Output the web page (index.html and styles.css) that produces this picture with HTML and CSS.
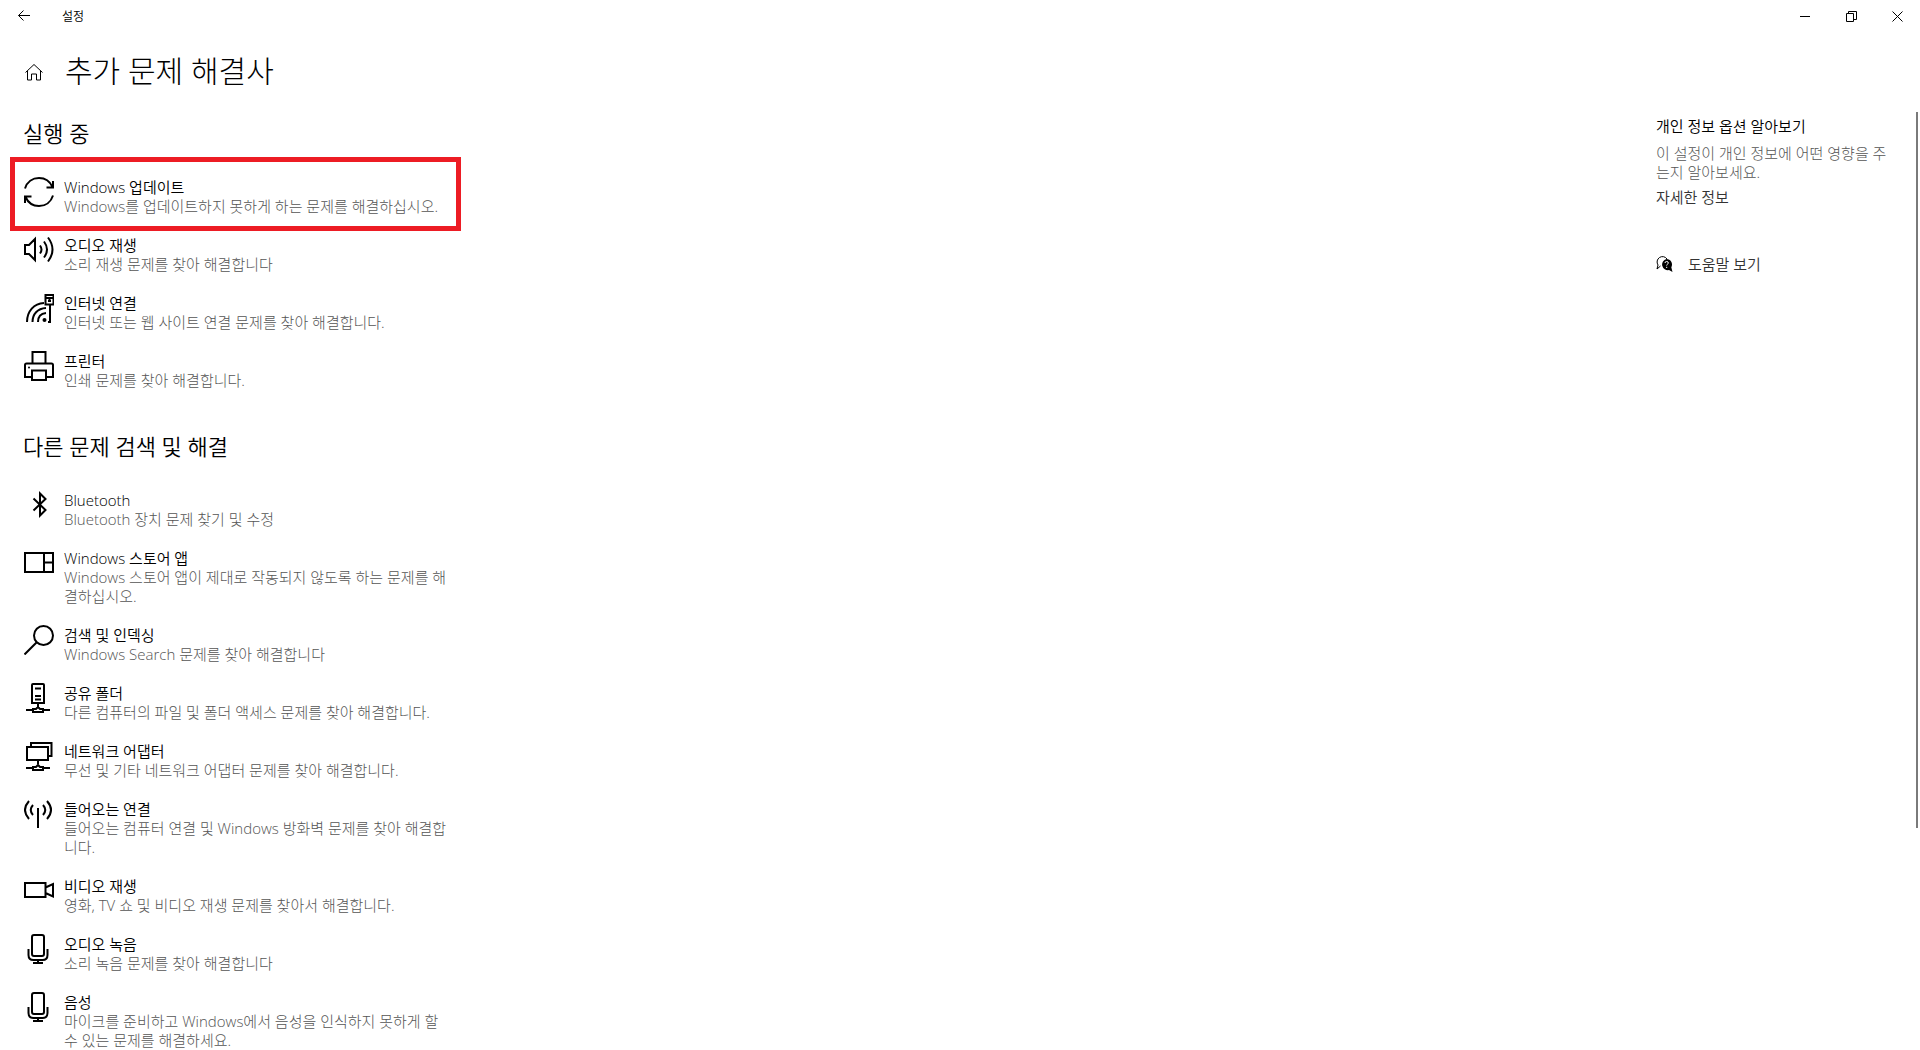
FILE: index.html
```html
<!DOCTYPE html>
<html lang="ko">
<head>
    <meta charset="UTF-8">
    <meta name="viewport" content="width=device-width, initial-scale=1.0">
    <title>설정</title>
    <link rel="stylesheet" href="styles.css">
</head>
<body>
    <!-- Title bar -->
    <header class="titlebar">
        <button class="back" aria-label="뒤로">
            <svg width="14" height="14" viewBox="0 0 14 14"><path d="M13 6.5H1.5M6.5 1.5l-5 5 5 5"></path></svg>
        </button>
        <span class="app-name">설정</span>
        <div class="window-buttons">
            <button aria-label="최소화">
                <svg width="11" height="11" viewBox="0 0 11 11"><path d="M0 5.5h10"></path></svg>
            </button>
            <button aria-label="이전 크기로 복원">
                <svg width="11" height="11" viewBox="0 0 11 11"><path d="M.5 2.5h7v8h-7zM2.5 2.5v-2h8v8h-3"></path></svg>
            </button>
            <button aria-label="닫기">
                <svg width="11" height="11" viewBox="0 0 11 11"><path d="M.5.5l10 10M10.5.5l-10 10"></path></svg>
            </button>
        </div>
    </header>

    <div class="page-title">
        <button class="home" aria-label="홈">
            <svg width="20" height="18" viewBox="0 0 20 18"><path d="M1.5 9.500L10 1.500l8.500 8M3.500 8v9h4v-6h5v6h4V8"></path></svg>
        </button>
        <h1>추가 문제 해결사</h1>
    </div>

    <div class="content">
        <main>
            <section>
                <h2>실행 중</h2>
                <ul class="list">
                    <li class="highlight">
                        <button class="item">
                            <svg class="icon" viewBox="0 0 30 30"><path d="M1 11.500C3 5 8.500 1 15 1c6 0 11 3.500 13.500 9M29 4v6.500h-6.500M29 18.500C27 25 21.500 29 15 29c-6 0-11-3.500-13.500-9M1 26v-6.500h6.500"></path></svg>
                            <span class="text">
                                <span class="name">Windows 업데이트</span>
                                <span class="desc">Windows를 업데이트하지 못하게 하는 문제를 해결하십시오.</span>
                            </span>
                        </button>
                    </li>
                    <li>
                        <button class="item">
                            <svg class="icon" viewBox="0 0 30 30"><path d="M1 10h4l6-6v21l-6-6H1zM16 10.500q3 4 0 8M20 6.500q6 8 0 16M24 2.500q9 12 0 24"></path></svg>
                            <span class="text">
                                <span class="name">오디오 재생</span>
                                <span class="desc">소리 재생 문제를 찾아 해결합니다</span>
                            </span>
                        </button>
                    </li>
                    <li>
                        <button class="item">
                            <svg class="icon" viewBox="0 0 30 30"><path d="M3 29C3 18 10 10.500 20 10M8.500 29c0-8 5-13.500 13.500-14M14 29c0-5 3-8.500 8-9M26 12v17h-2M21.500 2h8v9.500h-8zM21 5h9M25.500 5v4M24 8h3"></path><circle class="dot" cx="20.500" cy="27" r="2"></circle></svg>
                            <span class="text">
                                <span class="name">인터넷 연결</span>
                                <span class="desc">인터넷 또는 웹 사이트 연결 문제를 찾아 해결합니다.</span>
                            </span>
                        </button>
                    </li>
                    <li>
                        <button class="item">
                            <svg class="icon" viewBox="0 0 30 30"><path d="M8.500 12V1h13v11M7.500 26H1V14q0-1.500 1.500-1.500h25Q29 12.500 29 14v12h-6.500M8 19.500h14V29H8z"></path><circle class="dot" cx="5" cy="16.500" r="1"></circle></svg>
                            <span class="text">
                                <span class="name">프린터</span>
                                <span class="desc">인쇄 문제를 찾아 해결합니다.</span>
                            </span>
                        </button>
                    </li>
                </ul>
            </section>

            <section>
                <h2>다른 문제 검색 및 해결</h2>
                <ul class="list">
                    <li>
                        <button class="item">
                            <svg class="icon" viewBox="0 0 30 30"><path d="M9.500 8.500L21.500 20 16 25.500v-22L21.500 9 9.500 20.500"></path></svg>
                            <span class="text">
                                <span class="name">Bluetooth</span>
                                <span class="desc">Bluetooth 장치 문제 찾기 및 수정</span>
                            </span>
                        </button>
                    </li>
                    <li>
                        <button class="item">
                            <svg class="icon" viewBox="0 0 30 30"><path d="M1 5h28v19H1zM20 5v19M20 14.500h9"></path></svg>
                            <span class="text">
                                <span class="name">Windows 스토어 앱</span>
                                <span class="desc">Windows 스토어 앱이 제대로 작동되지 않도록 하는 문제를 해결하십시오.</span>
                            </span>
                        </button>
                    </li>
                    <li>
                        <button class="item">
                            <svg class="icon" viewBox="0 0 30 30"><circle cx="19.500" cy="10.500" r="9.500"></circle><path d="M13 17L.5 29.500"></path></svg>
                            <span class="text">
                                <span class="name">검색 및 인덱싱</span>
                                <span class="desc">Windows Search 문제를 찾아 해결합니다</span>
                            </span>
                        </button>
                    </li>
                    <li>
                        <button class="item">
                            <svg class="icon" viewBox="0 0 30 30"><path d="M9 1h10q1 0 1 1v18H8V2q0-1 1-1zM11 5.500h6M11 13h6M11 16.500h6M14 20v4M2 27h7M19 27h7M9 29v-3h3l2-2 2 2h3v3z"></path></svg>
                            <span class="text">
                                <span class="name">공유 폴더</span>
                                <span class="desc">다른 컴퓨터의 파일 및 폴더 액세스 문제를 찾아 해결합니다.</span>
                            </span>
                        </button>
                    </li>
                    <li>
                        <button class="item">
                            <svg class="icon" viewBox="0 0 30 30"><path d="M3 6h21v13H3zM7 6V2h20.500v13H24M14 19v4M2 27h7M19 27h7M9 29v-3h3l2-2 2 2h3v3z"></path></svg>
                            <span class="text">
                                <span class="name">네트워크 어댑터</span>
                                <span class="desc">무선 및 기타 네트워크 어댑터 문제를 찾아 해결합니다.</span>
                            </span>
                        </button>
                    </li>
                    <li>
                        <button class="item">
                            <svg class="icon" viewBox="0 0 30 30"><path d="M14 9v20M9 6q-4.500 5 0 10M19 6q4.500 5 0 10M5 2q-8 9 0 18M23 2q8 9 0 18"></path></svg>
                            <span class="text">
                                <span class="name">들어오는 연결</span>
                                <span class="desc">들어오는 컴퓨터 연결 및 Windows 방화벽 문제를 찾아 해결합니다.</span>
                            </span>
                        </button>
                    </li>
                    <li>
                        <button class="item">
                            <svg class="icon" viewBox="0 0 30 30"><path d="M1 7h20.500v14H1zM21.500 11.500L29 8v12.500L21.500 17"></path></svg>
                            <span class="text">
                                <span class="name">비디오 재생</span>
                                <span class="desc">영화, TV 쇼 및 비디오 재생 문제를 찾아서 해결합니다.</span>
                            </span>
                        </button>
                    </li>
                    <li>
                        <button class="item">
                            <svg class="icon" viewBox="0 0 30 30"><rect x="8" y="1" width="12" height="21" rx="2"></rect><path d="M4.500 15v6q0 5 5 5h9q5 0 5-5v-6M14 26v3M9 29h10"></path></svg>
                            <span class="text">
                                <span class="name">오디오 녹음</span>
                                <span class="desc">소리 녹음 문제를 찾아 해결합니다</span>
                            </span>
                        </button>
                    </li>
                    <li>
                        <button class="item">
                            <svg class="icon" viewBox="0 0 30 30"><rect x="8" y="1" width="12" height="21" rx="2"></rect><path d="M4.500 15v6q0 5 5 5h9q5 0 5-5v-6M14 26v3M9 29h10"></path></svg>
                            <span class="text">
                                <span class="name">음성</span>
                                <span class="desc">마이크를 준비하고 Windows에서 음성을 인식하지 못하게 할 수 있는 문제를 해결하세요.</span>
                            </span>
                        </button>
                    </li>
                </ul>
            </section>
        </main>

        <aside>
            <h3>개인 정보 옵션 알아보기</h3>
            <p>이 설정이 개인 정보에 어떤 영향을 주는지 알아보세요.</p>
            <a href="#">자세한 정보</a>
            <a class="help" href="#">
                <svg width="17" height="17" viewBox="0 0 17 17">
                    <path class="bubble" d="M4.500 10L1 13l1-4A5 5 0 1 1 11 3"></path>
                    <path class="fill" d="M10.500 3a5.500 5.500 0 0 1 4.800 8.200L16.500 16l-3.500-2A5.500 5.500 0 1 1 10.500 3z"></path>
                    <path class="mark" d="M9 7q0-1.500 1.700-1.500T12.300 7q0 .8-.9 1.300t-.7 1.200M10.700 10.800v1.200"></path>
                </svg>
                도움말 보기
            </a>
        </aside>

        <div class="scrollbar"><div class="thumb"></div></div>
    </div>
</body>
</html>
```
FILE: styles.css
```css
* {
    box-sizing: border-box;
}

body {
    margin: 0;
    height: 100vh;
    display: flex;
    flex-direction: column;
    overflow: hidden;
    background: #fff;
    color: #000;
    font-family: "Open Sans", "Noto Sans CJK KR", sans-serif;
    font-size: 15px;
    font-weight: 350;
    line-height: 19px;
}

h1, h2, h3, p, ul {
    margin: 0;
    padding: 0;
    font-weight: 350;
}

button {
    background: none;
    border: none;
    padding: 0;
    color: inherit;
    font: inherit;
    text-align: left;
    cursor: pointer;
}

svg {
    display: block;
    flex-shrink: 0;
    fill: none;
    stroke: #000;
}

/* Title bar */
.titlebar {
    display: flex;
    align-items: center;
    height: 32px;
    flex-shrink: 0;
}

.back {
    width: 46px;
    padding-left: 17px;
}

.app-name {
    margin-left: 16px;
    font-size: 12px;
}

.window-buttons {
    display: flex;
    margin-left: auto;
}

.window-buttons button {
    width: 46px;
    height: 32px;
    padding-left: 18px;
}

/* Page heading */
.page-title {
    display: flex;
    align-items: center;
    gap: 21px;
    height: 80px;
    padding: 0 24px;
    flex-shrink: 0;
}

h1 {
    font-size: 30px;
    line-height: 40px;
    font-weight: 300;
    padding-bottom: 2px;
}

.content {
    display: flex;
    flex: 1;
    min-height: 0;
}

main {
    width: 433px;
    margin-left: 23px;
}

h2 {
    font-size: 22px;
    line-height: 30px;
    padding: 6px 0 20px;
}

section + section h2 {
    padding-top: 31px;
}

.list {
    list-style: none;
    padding-left: 1px;
}

.item {
    display: flex;
    gap: 10px;
    width: 100%;
    padding: 9px 0 10px;
}

.icon {
    width: 30px;
    height: 30px;
    stroke-width: 2;
}

.dot {
    fill: #000;
    stroke: none;
}

.text {
    flex: 1;
    padding-top: 1px;
}

.name, .desc {
    display: block;
}

.desc {
    color: #555;
    font-weight: 300;
}

.highlight {
    position: relative;
}

/* Red frame around the item */
.highlight::after {
    content: "";
    position: absolute;
    top: -11px;
    right: -5px;
    bottom: -5px;
    left: -14px;
    border: 5px solid #ed1c24;
    pointer-events: none;
}

/* Side panel */
aside {
    display: flex;
    flex-direction: column;
    align-items: flex-start;
    width: 243px;
    margin-left: auto;
    margin-right: 17px;
    padding-top: 5px;
}

h3 {
    font-size: 15px;
    line-height: 19px;
    margin-bottom: 8px;
}

aside p {
    color: #555;
    font-weight: 300;
    margin-bottom: 6px;
}

aside a {
    color: #333;
    text-decoration: none;
}

.help {
    display: flex;
    align-items: center;
    gap: 15px;
    margin-top: 48px;
}

.help .fill {
    fill: #000;
    stroke: none;
}

.help .mark {
    stroke: #fff;
}

.scrollbar {
    width: 4px;
}

.thumb {
    width: 2px;
    height: 76.3%;
    background: #7a7a7a;
}
```
